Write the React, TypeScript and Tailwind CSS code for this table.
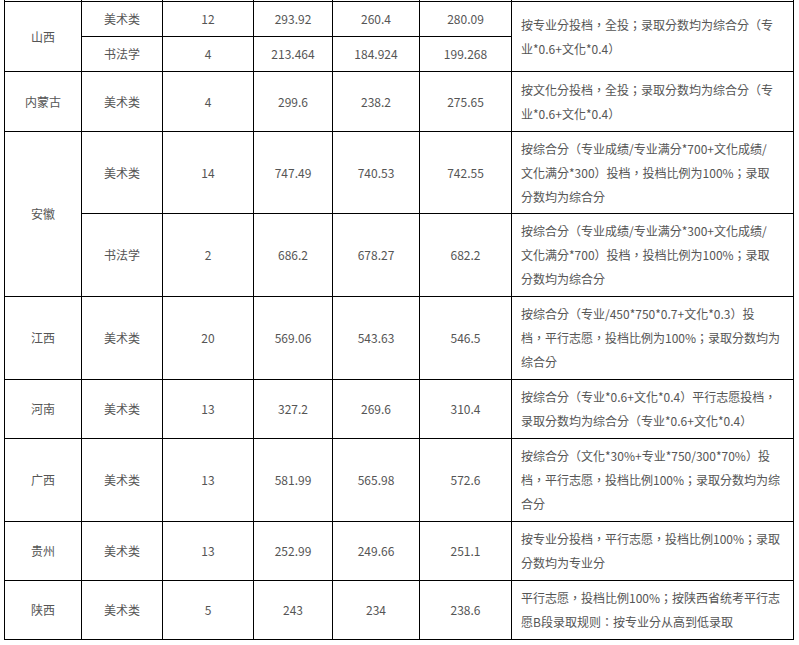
const rows: {
  prov: string;
  span: number;
  items: { kind: string; num: string; max: string; min: string; avg: string; h: string }[];
  note: string[];
  noteSpan?: boolean;
}[] = [
  {
    prov: "山西",
    span: 2,
    items: [
      { kind: "美术类", num: "12", max: "293.92", min: "260.4", avg: "280.09", h: "h-[34px]" },
      { kind: "书法学", num: "4", max: "213.464", min: "184.924", avg: "199.268", h: "h-[34px]" },
    ],
    note: ["按专业分投档，全投；录取分数均为综合分（专", "业*0.6+文化*0.4）"],
    noteSpan: true,
  },
  {
    prov: "内蒙古",
    span: 1,
    items: [{ kind: "美术类", num: "4", max: "299.6", min: "238.2", avg: "275.65", h: "h-[59px]" }],
    note: ["按文化分投档，全投；录取分数均为综合分（专", "业*0.6+文化*0.4）"],
  },
];

type Item = { kind: string; num: string; max: string; min: string; avg: string; note: string[] };

const anhui: Item[] = [
  {
    kind: "美术类",
    num: "14",
    max: "747.49",
    min: "740.53",
    avg: "742.55",
    note: ["按综合分（专业成绩/专业满分*700+文化成绩/", "文化满分*300）投档，投档比例为100%；录取", "分数均为综合分"],
  },
  {
    kind: "书法学",
    num: "2",
    max: "686.2",
    min: "678.27",
    avg: "682.2",
    note: ["按综合分（专业成绩/专业满分*300+文化成绩/", "文化满分*700）投档，投档比例为100%；录取", "分数均为综合分"],
  },
];

const singles: (Item & { prov: string; h: string })[] = [
  {
    prov: "江西",
    kind: "美术类",
    num: "20",
    max: "569.06",
    min: "543.63",
    avg: "546.5",
    h: "h-[82px]",
    note: ["按综合分（专业/450*750*0.7+文化*0.3）投", "档，平行志愿，投档比例为100%；录取分数均为", "综合分"],
  },
  {
    prov: "河南",
    kind: "美术类",
    num: "13",
    max: "327.2",
    min: "269.6",
    avg: "310.4",
    h: "h-[58px]",
    note: ["按综合分（专业*0.6+文化*0.4）平行志愿投档，", "录取分数均为综合分（专业*0.6+文化*0.4）"],
  },
  {
    prov: "广西",
    kind: "美术类",
    num: "13",
    max: "581.99",
    min: "565.98",
    avg: "572.6",
    h: "h-[82px]",
    note: ["按综合分（文化*30%+专业*750/300*70%）投", "档，平行志愿，投档比例100%；录取分数均为综", "合分"],
  },
  {
    prov: "贵州",
    kind: "美术类",
    num: "13",
    max: "252.99",
    min: "249.66",
    avg: "251.1",
    h: "h-[58px]",
    note: ["按专业分投档，平行志愿，投档比例100%；录取", "分数均为专业分"],
  },
  {
    prov: "陕西",
    kind: "美术类",
    num: "5",
    max: "243",
    min: "234",
    avg: "238.6",
    h: "h-[58px]",
    note: ["平行志愿，投档比例100%；按陕西省统考平行志", "愿B段录取规则：按专业分从高到低录取"],
  },
];

const cell = "bg-white flex items-center justify-center";

// 备注列：用 TC 字形让全角标点居中，接近原图
function Note({ lines }: { lines: string[] }) {
  return (
    <div
      className="bg-white flex flex-col justify-center pl-[9px] leading-[24px] whitespace-nowrap overflow-hidden"
      style={{ fontFamily: '"Noto Sans CJK TC", "Noto Sans CJK SC", sans-serif' }}
    >
      {lines.map((l, i) => (
        <span key={i}>{l}</span>
      ))}
    </div>
  );
}

export default function App() {
  return (
    <div
      className="w-[799px] h-[645px] bg-white text-[12px] text-[#555]"
      style={{ fontFamily: '"Noto Sans CJK SC", sans-serif' }}
    >
      <div className="ml-[4px] w-[790px] bg-black px-px pb-px grid grid-cols-[76px_80px_90px_78px_86px_91px_281px] gap-px">
        {/* 上一行露出的一点 */}
        {[0, 1, 2, 3, 4, 5, 6].map((i) => (
          <div key={i} className="bg-white h-[1px]" />
        ))}

        {/* 山西 */}
        <div className={`${cell} row-span-2`}>{rows[0].prov}</div>
        {rows[0].items.map((it, i) => (
          <div key={it.kind} className="contents">
            <div className={`${cell} ${it.h}`}>{it.kind}</div>
            <div className={cell}>{it.num}</div>
            <div className={cell}>{it.max}</div>
            <div className={cell}>{it.min}</div>
            <div className={cell}>{it.avg}</div>
            {i === 0 && (
              <div className="row-span-2 grid">
                <Note lines={rows[0].note} />
              </div>
            )}
          </div>
        ))}

        {/* 内蒙古 */}
        <div className={`${cell} h-[59px]`}>{rows[1].prov}</div>
        <div className={cell}>{rows[1].items[0].kind}</div>
        <div className={cell}>{rows[1].items[0].num}</div>
        <div className={cell}>{rows[1].items[0].max}</div>
        <div className={cell}>{rows[1].items[0].min}</div>
        <div className={cell}>{rows[1].items[0].avg}</div>
        <Note lines={rows[1].note} />

        {/* 安徽 */}
        <div className={`${cell} row-span-2`}>安徽</div>
        {anhui.map((it, i) => (
          <div key={it.kind} className="contents">
            <div className={`${cell} ${i === 0 ? "h-[81px]" : "h-[82px]"}`}>{it.kind}</div>
            <div className={cell}>{it.num}</div>
            <div className={cell}>{it.max}</div>
            <div className={cell}>{it.min}</div>
            <div className={cell}>{it.avg}</div>
            <Note lines={it.note} />
          </div>
        ))}

        {singles.map((it) => (
          <div key={it.prov} className="contents">
            <div className={`${cell} ${it.h}`}>{it.prov}</div>
            <div className={cell}>{it.kind}</div>
            <div className={cell}>{it.num}</div>
            <div className={cell}>{it.max}</div>
            <div className={cell}>{it.min}</div>
            <div className={cell}>{it.avg}</div>
            <Note lines={it.note} />
          </div>
        ))}
      </div>
    </div>
  );
}
